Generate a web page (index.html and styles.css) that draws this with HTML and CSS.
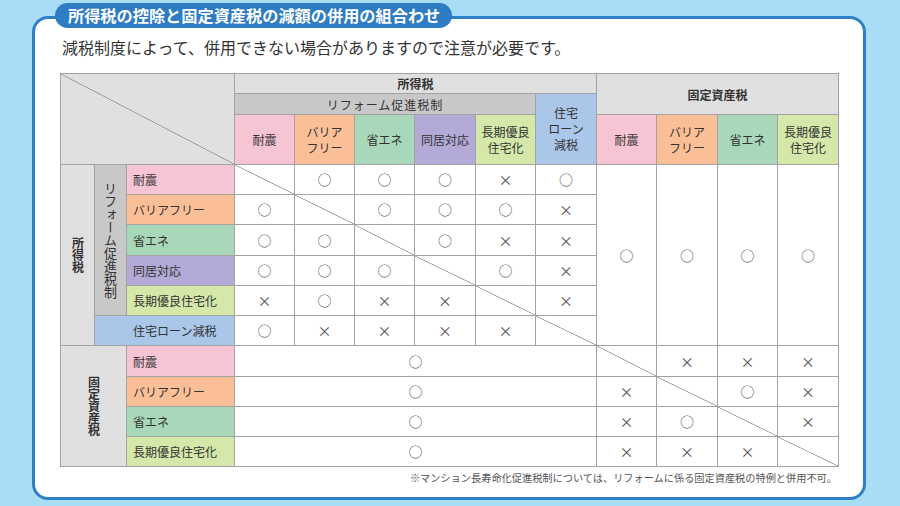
FILE: index.html
```html
<!DOCTYPE html>
<html lang="ja">
<head>
<meta charset="utf-8">
<title>所得税の控除と固定資産税の減額の併用の組合わせ</title>
<link rel="stylesheet" href="styles.css">
</head>
<body>
<section class="panel">
  <h1 class="pill">所得税の控除と固定資産税の減額の併用の組合わせ</h1>
  <p class="lead">減税制度によって、併用できない場合がありますので注意が必要です。</p>
  <div class="grid">
    <!-- header row 1 -->
    <div class="cell corner c3 r3"></div>
    <div class="cell hd bold c6">所得税</div>
    <div class="cell hd bold c4 r2">固定資産税</div>
    <!-- header row 2 -->
    <div class="cell hd2 c5 spaced">リフォーム促進税制</div>
    <div class="cell blue r2 col">住宅<br>ローン<br>減税</div>
    <!-- header row 3 -->
    <div class="cell pink col">耐震</div>
    <div class="cell orange col">バリア<br>フリー</div>
    <div class="cell green col">省エネ</div>
    <div class="cell purple col">同居対応</div>
    <div class="cell lime col">長期優良<br>住宅化</div>
    <div class="cell pink col">耐震</div>
    <div class="cell orange col">バリア<br>フリー</div>
    <div class="cell green col">省エネ</div>
    <div class="cell lime col">長期優良<br>住宅化</div>

    <!-- body: 所得税 rows -->
    <div class="cell hd r6 vert bold">所得税</div>
    <div class="cell hd2 r5 vert vert-lg">リフォーム促進税制</div>
    <div class="cell pink lbl">耐震</div>
    <div class="cell diag"></div>
    <div class="cell mk">○</div>
    <div class="cell mk">○</div>
    <div class="cell mk">○</div>
    <div class="cell mk">×</div>
    <div class="cell mk">○</div>
    <div class="cell mk r6">○</div>
    <div class="cell mk r6">○</div>
    <div class="cell mk r6">○</div>
    <div class="cell mk r6">○</div>

    <div class="cell orange lbl">バリアフリー</div>
    <div class="cell mk">○</div>
    <div class="cell diag"></div>
    <div class="cell mk">○</div>
    <div class="cell mk">○</div>
    <div class="cell mk">○</div>
    <div class="cell mk">×</div>

    <div class="cell green lbl">省エネ</div>
    <div class="cell mk">○</div>
    <div class="cell mk">○</div>
    <div class="cell diag"></div>
    <div class="cell mk">○</div>
    <div class="cell mk">×</div>
    <div class="cell mk">×</div>

    <div class="cell purple lbl">同居対応</div>
    <div class="cell mk">○</div>
    <div class="cell mk">○</div>
    <div class="cell mk">○</div>
    <div class="cell diag"></div>
    <div class="cell mk">○</div>
    <div class="cell mk">×</div>

    <div class="cell lime lbl">長期優良住宅化</div>
    <div class="cell mk">×</div>
    <div class="cell mk">○</div>
    <div class="cell mk">×</div>
    <div class="cell mk">×</div>
    <div class="cell diag"></div>
    <div class="cell mk">×</div>

    <div class="cell blue lbl lbl-wide c2">住宅ローン減税</div>
    <div class="cell mk">○</div>
    <div class="cell mk">×</div>
    <div class="cell mk">×</div>
    <div class="cell mk">×</div>
    <div class="cell mk">×</div>
    <div class="cell diag"></div>

    <!-- body: 固定資産税 rows -->
    <div class="cell hd c2 r4 vert bold">固定資産税</div>
    <div class="cell pink lbl">耐震</div>
    <div class="cell mk c6">○</div>
    <div class="cell diag"></div>
    <div class="cell mk">×</div>
    <div class="cell mk">×</div>
    <div class="cell mk">×</div>

    <div class="cell orange lbl">バリアフリー</div>
    <div class="cell mk c6">○</div>
    <div class="cell mk">×</div>
    <div class="cell diag"></div>
    <div class="cell mk">○</div>
    <div class="cell mk">×</div>

    <div class="cell green lbl">省エネ</div>
    <div class="cell mk c6">○</div>
    <div class="cell mk">×</div>
    <div class="cell mk">○</div>
    <div class="cell diag"></div>
    <div class="cell mk">×</div>

    <div class="cell lime lbl">長期優良住宅化</div>
    <div class="cell mk c6">○</div>
    <div class="cell mk">×</div>
    <div class="cell mk">×</div>
    <div class="cell mk">×</div>
    <div class="cell diag"></div>
  </div>
  <p class="note">※マンション長寿命化促進税制については、リフォームに係る固定資産税の特例と併用不可。</p>
</section>
</body>
</html>
```

FILE: styles.css
```css
html, body {
  margin: 0;
  padding: 0;
}
body {
  width: 900px;
  height: 506px;
  overflow: hidden;
  background: #a9dcf5;
  font-family: "Noto Sans CJK JP", "Noto Sans", sans-serif;
  color: #333;
}
.panel {
  position: relative;
  box-sizing: border-box;
  width: 834px;
  height: 484px;
  margin: 16px 0 0 32px;
  border: 3px solid #2f7fc7;
  border-radius: 16px;
  background: #fff;
  padding: 18px 0 0 25px;
}
.pill {
  position: absolute;
  top: -16px;
  left: 20px;
  margin: 0;
  height: 25px;
  line-height: 25px;
  padding: 0 12px 0 13px;
  border-radius: 13px;
  background: #2e7cc4;
  color: #fff;
  font-size: 16.2px;
  font-weight: 700;
  white-space: nowrap;
}
.lead {
  margin: 0 0 16px 2px;
  font-size: 16px;
  line-height: 20px;
  color: #333;
}
.grid {
  display: grid;
  width: max-content;
  grid-template-columns: 33px 31px 107px 59px 59px 59px 60px 59px 60px 59px 60px 59px 60px;
  grid-template-rows: 19px 20px 49px 29px 29px 30px 29px 29px 29px 30px 29px 29px 29px;
  gap: 1px;
  border: 1px solid #a3a3a3;
  background: #a3a3a3;
}
.cell {
  background: #fff;
  font-size: 12px;
  line-height: 15px;
  color: #333;
  display: flex;
  align-items: center;
  justify-content: center;
  text-align: center;
}
.c2 { grid-column: span 2; }
.c3 { grid-column: span 3; }
.c4 { grid-column: span 4; }
.c5 { grid-column: span 5; }
.c6 { grid-column: span 6; }
.r2 { grid-row: span 2; }
.r3 { grid-row: span 3; }
.r4 { grid-row: span 4; }
.r5 { grid-row: span 5; }
.r6 { grid-row: span 6; }

.hd { background: #e1e0e1; }
.hd2 { background: #c9c8c9; }
.bold { font-weight: 700; }
.spaced { letter-spacing: 1px; }
.corner {
  background: #e1e0e1 linear-gradient(to bottom left, transparent calc(50% - 0.7px), #8c8c8c 50%, transparent calc(50% + 0.7px));
}
.diag {
  background: #fff linear-gradient(to bottom left, transparent calc(50% - 0.7px), #8c8c8c 50%, transparent calc(50% + 0.7px));
}
.pink { background: #f7c4d4; }
.orange { background: #fbbf98; }
.green { background: #a8d8b9; }
.purple { background: #b3aad7; }
.lime { background: #d5e8aa; }
.blue { background: #aac6e8; }
.col { line-height: 16px; }
.lbl {
  justify-content: flex-start;
  padding-left: 6px;
}
.lbl-wide { padding-left: 38px; }
.vert {
  writing-mode: vertical-rl;
  text-orientation: upright;
  line-height: 1;
}
.vert-lg {
  font-size: 13px;
}
.mk {
  font-size: 14px;
  color: #555;
}
.note {
  margin: 4px 0 0 0;
  width: 777px;
  text-align: right;
  font-size: 10.2px;
  line-height: 14px;
  color: #555;
}
```
